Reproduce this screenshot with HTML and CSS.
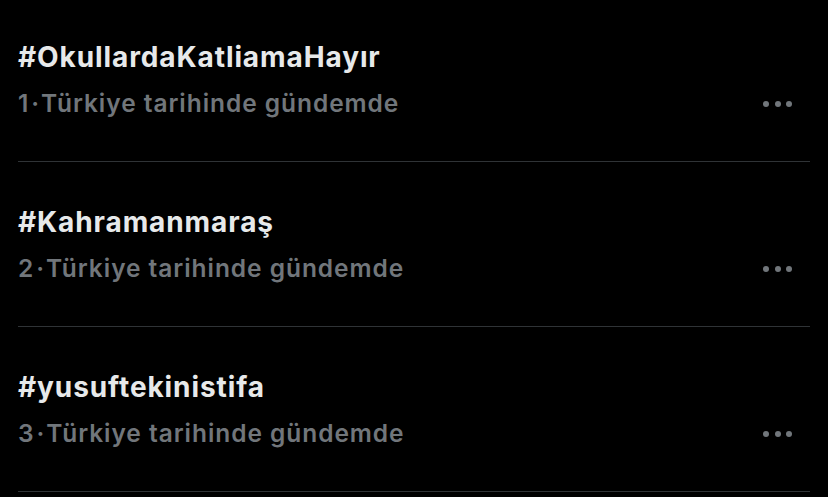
FILE: index.html
```html
<!DOCTYPE html>
<html lang="tr">
<head>
  <meta charset="UTF-8">
  <title>Gündem</title>
  <link rel="stylesheet" href="styles.css">
</head>
<body>

  <!-- Gündem listesi -->
  <div class="trends">
    <div class="trend">
      <div class="trend-text">
        <div class="trend-title">#OkullardaKatliamaHayır</div>
        <div class="trend-meta">1<span class="dot">·</span>Türkiye tarihinde gündemde</div>
      </div>
      <div class="more"><span></span><span></span><span></span></div>
    </div>

    <div class="trend">
      <div class="trend-text">
        <div class="trend-title">#Kahramanmaraş</div>
        <div class="trend-meta">2<span class="dot">·</span>Türkiye tarihinde gündemde</div>
      </div>
      <div class="more"><span></span><span></span><span></span></div>
    </div>

    <div class="trend">
      <div class="trend-text">
        <div class="trend-title">#yusuftekinistifa</div>
        <div class="trend-meta">3<span class="dot">·</span>Türkiye tarihinde gündemde</div>
      </div>
      <div class="more"><span></span><span></span><span></span></div>
    </div>
  </div>

</body>
</html>
```

FILE: styles.css
```css
body {
  margin: 0;
  padding: 0;
  background: #000;
  font-family: Inter, "Noto Sans", sans-serif;
  overflow: hidden;
}

.trends {
  margin-top: -3px;
  padding: 0 18px;
}

.trend {
  display: flex;
  align-items: flex-start;
  justify-content: space-between;
  height: 164px;
  border-bottom: 1px solid #2f3336;
}

.trend-text {
  padding-top: 42px;
}

.trend-title {
  color: #e7e9ea;
  font-size: 28px;
  font-weight: 700;
  line-height: 36px;
  letter-spacing: 0.9px;
}

.trend-meta {
  color: #71767b;
  font-size: 24.5px;
  font-weight: 600;
  line-height: 30px;
  letter-spacing: 0.95px;
  margin-top: 13px;
}

/* point entre le rang et le libellé */
.trend-meta .dot {
  margin: 0 1px 0 2px;
}

.more {
  display: flex;
  gap: 5.5px;
  margin-top: 104px;
  margin-right: 18px;
}

.more span {
  width: 6px;
  height: 6px;
  border-radius: 50%;
  background: #71767b;
}
```
